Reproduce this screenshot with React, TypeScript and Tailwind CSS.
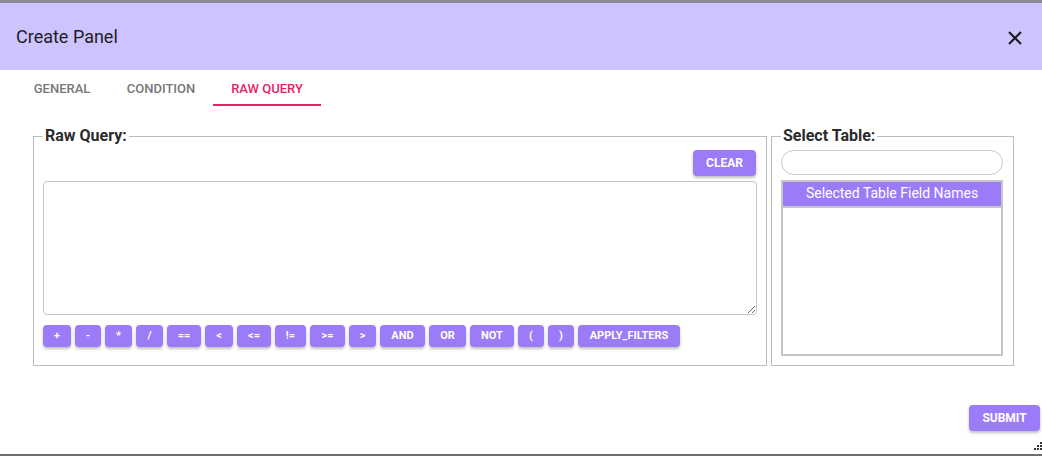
import React from 'react';

// Create Panel dialog — "RAW QUERY" tab selected

const OPERATORS: { label: string; w: string }[] = [
  { label: '+', w: 'w-[28px]' },
  { label: '-', w: 'w-[26px]' },
  { label: '*', w: 'w-[27px]' },
  { label: '/', w: 'w-[27px]' },
  { label: '==', w: 'w-[34px]' },
  { label: '<', w: 'w-[28px]' },
  { label: '<=', w: 'w-[34px]' },
  { label: '!=', w: 'w-[31px]' },
  { label: '>=', w: 'w-[35px]' },
  { label: '>', w: 'w-[27px]' },
  { label: 'AND', w: 'w-[45px]' },
  { label: 'OR', w: 'w-[37px]' },
  { label: 'NOT', w: 'w-[44px]' },
  { label: '(', w: 'w-[26px]' },
  { label: ')', w: 'w-[26px]' },
  { label: 'APPLY_FILTERS', w: 'w-[102px]' },
];

const TABS = [
  { label: 'GENERAL', w: 'w-[94px]' },
  { label: 'CONDITION', w: 'w-[104px]' },
  { label: 'RAW QUERY', w: 'w-[108px]' },
];

function PurpleButton({ children, className }: { children: React.ReactNode; className: string }) {
  return (
    <button
      className={
        'flex shrink-0 items-center justify-center rounded-[4px] bg-[#9b7bf8] font-bold uppercase text-white shadow-[0_2px_3px_rgba(0,0,0,0.25)] ' +
        className
      }
    >
      {children}
    </button>
  );
}

export default function App() {
  const active = 'RAW QUERY';

  return (
    <div className="flex h-[456px] w-[1042px] flex-col overflow-hidden bg-white font-['Roboto',sans-serif]">
      <div className="h-[3px] bg-[#8c8a92]" />

      {/* header */}
      <div className="flex h-[67px] items-center justify-between bg-[#cdc4ff] pl-4 pr-5">
        <h1 className="text-[18px] leading-none text-[#1d1d1f]">Create Panel</h1>
        <svg width="14" height="14" viewBox="0 0 14 14" className="mt-[2px]">
          <path d="M1 1 L13 13 M13 1 L1 13" stroke="#1a1a1a" strokeWidth="2" />
        </svg>
      </div>

      {/* tabs */}
      <div className="flex h-[36px] pl-[15px]">
        {TABS.map((t) => (
          <div
            key={t.label}
            className={
              'flex items-center justify-center border-b-2 pt-[3px] text-[13px] font-medium ' +
              t.w +
              (t.label === active ? ' border-[#e91e63] text-[#e91e63]' : ' border-transparent text-[#777777]')
            }
          >
            {t.label}
          </div>
        ))}
      </div>

      {/* body */}
      <div className="mt-[21px] flex gap-[4px] pl-[33px]">
        <fieldset className="w-[734px] border border-[#bdbdbd] pb-[18px] pl-[9px] pr-[9px]">
          <legend className="px-[2px] text-[16px] font-bold leading-[18px] text-[#2b2b2b]">Raw Query:</legend>
          <div className="mt-[5px] flex justify-end pr-px">
            <PurpleButton className="h-[26px] w-[63px] text-[12px]">Clear</PurpleButton>
          </div>
          <textarea className="mt-[5px] block h-[134px] w-[714px] rounded-[4px] border border-[#c4c4c4] outline-none" />
          <div className="mt-[10px] flex gap-[4px]">
            {OPERATORS.map((op) => (
              <PurpleButton key={op.label} className={'h-[22px] text-[11px] ' + op.w}>
                {op.label}
              </PurpleButton>
            ))}
          </div>
        </fieldset>

        <fieldset className="w-[243px] border border-[#bdbdbd] pb-[8px] pl-[9px] pr-[10px]">
          <legend className="px-[2px] text-[16px] font-bold leading-[18px] text-[#2b2b2b]">Select Table:</legend>
          <input className="mt-[5px] block h-[25px] w-[222px] rounded-full border border-[#c8c8c8] outline-none" />
          <div className="mt-[5px] flex h-[176px] w-[222px] flex-col border-2 border-[#c6c6c6]">
            <div className="flex h-[26px] items-center justify-center border-b-2 border-[#c6c6c6] bg-[#9b7bf8] pb-[2px] text-[14px] text-white">
              Selected Table Field Names
            </div>
          </div>
        </fieldset>
      </div>

      {/* footer */}
      <div className="mt-[39px] flex justify-end pr-[2px]">
        <PurpleButton className="h-[26px] w-[71px] text-[12px]">Submit</PurpleButton>
      </div>

      <div className="flex flex-1 items-end justify-end pb-[3px] pr-0">
        <svg width="8" height="9" viewBox="0 0 8 9">
          <rect x="6" y="0" width="2" height="2" fill="#333" />
          <rect x="3" y="3" width="2" height="2" fill="#333" />
          <rect x="6" y="3" width="2" height="2" fill="#333" />
          <rect x="0" y="6" width="2" height="2" fill="#333" />
          <rect x="3" y="6" width="2" height="2" fill="#333" />
          <rect x="6" y="6" width="2" height="2" fill="#333" />
        </svg>
      </div>
      <div className="h-[2px] bg-[#6e6e6e]" />
    </div>
  );
}
